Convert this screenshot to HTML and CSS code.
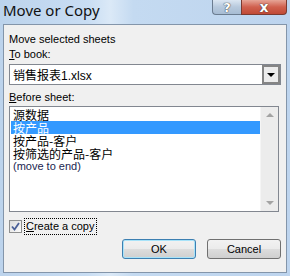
FILE: index.html
```html
<!DOCTYPE html>
<html lang="zh-CN">
<head>
  <meta charset="UTF-8">
  <title>Move or Copy</title>
  <link rel="stylesheet" href="styles.css">
</head>
<body>
  <div class="window">
    <header class="titlebar">
      <span class="title">Move or Copy</span>
      <div class="caption-buttons">
        <button class="cap-btn help">?</button>
        <button class="cap-btn close">x</button>
      </div>
    </header>

    <main class="client">
      <p class="label first">Move selected sheets</p>
      <p class="label"><u>T</u>o book:</p>
      <div class="combo">
        <span class="combo-value"><span class="cjk">销售报表</span>1.xlsx</span>
        <span class="combo-arrow"></span>
      </div>

      <p class="label before"><u>B</u>efore sheet:</p>
      <div class="listbox">
        <ul class="items">
          <li class="cjk">源数据</li>
          <li class="cjk selected">按产品</li>
          <li class="cjk">按产品-客户</li>
          <li class="cjk">按筛选的产品-客户</li>
          <li class="end">(move to end)</li>
        </ul>
        <div class="scrollbar">
          <span class="arrow up"></span>
          <span class="arrow down"></span>
        </div>
      </div>

      <label class="check-row">
        <span class="checkbox">
          <svg width="9" height="9" viewBox="0 0 9 9"><path d="M1 4.5 L3.5 7.5 L8 1" fill="none" stroke="#4a5f97" stroke-width="1.8"/></svg>
        </span>
        <span class="check-text"><u>C</u>reate a copy</span>
      </label>

      <div class="actions">
        <button class="btn default">OK</button>
        <button class="btn">Cancel</button>
      </div>
    </main>
  </div>
</body>
</html>
```

FILE: styles.css
```css
/* Page */
body {
  margin: 0;
  background: #c3d8ef;
}

.window {
  width: 290px;
  height: 276px;
  background: linear-gradient(to right, #bcd3ec 0%, #c8ddf3 30%, #dbe9f7 38%, #c4daf1 46%, #bdd4ee 100%);
  font-family: "Liberation Sans", "Noto Sans CJK SC", sans-serif;
  font-size: 11px;
  color: #000;
  overflow: hidden;
}

/* Title bar */
.titlebar {
  height: 24px;
  display: flex;
  align-items: flex-start;
}

.title {
  font-family: "Noto Sans", sans-serif;
  font-size: 15px;
  line-height: 18px;
  padding: 1px 0 0 3px;
  color: #111;
}

.caption-buttons {
  margin-left: auto;
  margin-right: 3px;
  display: flex;
}

.cap-btn {
  height: 15px;
  border: 1px solid #6b7c90;
  border-top: none;
  padding: 0;
  font-family: "DejaVu Sans", sans-serif;
  font-weight: bold;
  color: #fff;
  line-height: 13px;
  text-shadow: 0 0 1px #333, 0 0 1px #333;
}

.help {
  width: 29px;
  border-radius: 0 0 0 4px;
  border-right: none;
  background: linear-gradient(#dbe6f2, #b7c9dd 50%, #a7bcd3);
  font-size: 13px;
}

.close {
  width: 46px;
  border-color: #7a3a30;
  border-radius: 0 0 4px 0;
  background: linear-gradient(#e6a597, #d0604e 50%, #c04a36);
  font-size: 14px;
}

/* Client area */
.client {
  margin: 0 3px;
  height: 247px;
  background: #f0f0f0;
  border: 1px solid #8395aa;
  padding: 0 5px;
}

.label {
  margin: 0;
  line-height: 13px;
  padding-top: 2px;
}

.label.first {
  padding-top: 8px;
}

.label.before {
  padding-top: 6px;
}

.cjk {
  font-family: "Noto Sans CJK SC", sans-serif;
  font-size: 12px;
}

/* Combo box */
.combo {
  margin-top: 3px;
  height: 19px;
  border: 1px solid #828790;
  background: #fff;
  display: flex;
  align-items: center;
}

.combo-value {
  padding-left: 3px;
  font-size: 12px;
  flex: 1;
}

.combo-arrow {
  width: 14px;
  height: 15px;
  border: 2px solid #858585;
  background: #ececec;
  position: relative;
}

.combo-arrow::after {
  content: "";
  position: absolute;
  left: 3px;
  top: 6px;
  border-left: 4px solid transparent;
  border-right: 4px solid transparent;
  border-top: 4px solid #000;
}

/* List box */
.listbox {
  margin-top: 2px;
  height: 104px;
  border: 1px solid #828790;
  background: #fff;
  display: flex;
  margin-right: 2px;
}

.items {
  list-style: none;
  margin: 0;
  padding: 1px 0 0 1px;
  flex: 1;
}

.items li {
  height: 13px;
  line-height: 13px;
  padding-left: 2px;
  white-space: nowrap;
}

.items .selected {
  background: #3399ff;
  color: #fff;
}

.items .end {
  color: #1a2550;
}

.scrollbar {
  width: 17px;
  background: #ececec;
  border-left: 1px solid #f5f5f5;
  position: relative;
}

.arrow {
  position: absolute;
  left: 5px;
  border-left: 4px solid transparent;
  border-right: 4px solid transparent;
}

.arrow.up {
  top: 6px;
  border-bottom: 4px solid #a3a3a3;
}

.arrow.down {
  bottom: 6px;
  border-top: 4px solid #a3a3a3;
}

/* Checkbox */
.check-row {
  margin-top: 6px;
  display: flex;
  align-items: center;
  height: 16px;
}

.checkbox {
  width: 11px;
  height: 11px;
  border: 1px solid #8e8f8f;
  background: linear-gradient(135deg, #dcdcdc, #fbfbfb);
  display: flex;
  align-items: center;
  justify-content: center;
}

.check-text {
  margin-left: 2px;
  padding: 1px 1px;
  border: 1px dotted #000;
  line-height: 13px;
}

/* Buttons */
.actions {
  margin-top: 5px;
  display: flex;
  justify-content: flex-end;
  gap: 11px;
}

.btn {
  width: 74px;
  height: 20px;
  border: 1px solid #707070;
  border-radius: 3px;
  background: linear-gradient(#f2f2f2 0%, #ebebeb 50%, #dddddd 51%, #cfcfcf 100%);
  font-family: "Liberation Sans", sans-serif;
  font-size: 11px;
  color: #000;
  padding: 0;
}

.btn.default {
  border-color: #3c7fb1;
  box-shadow: inset 0 0 0 1px #a8e3f9;
}
```
